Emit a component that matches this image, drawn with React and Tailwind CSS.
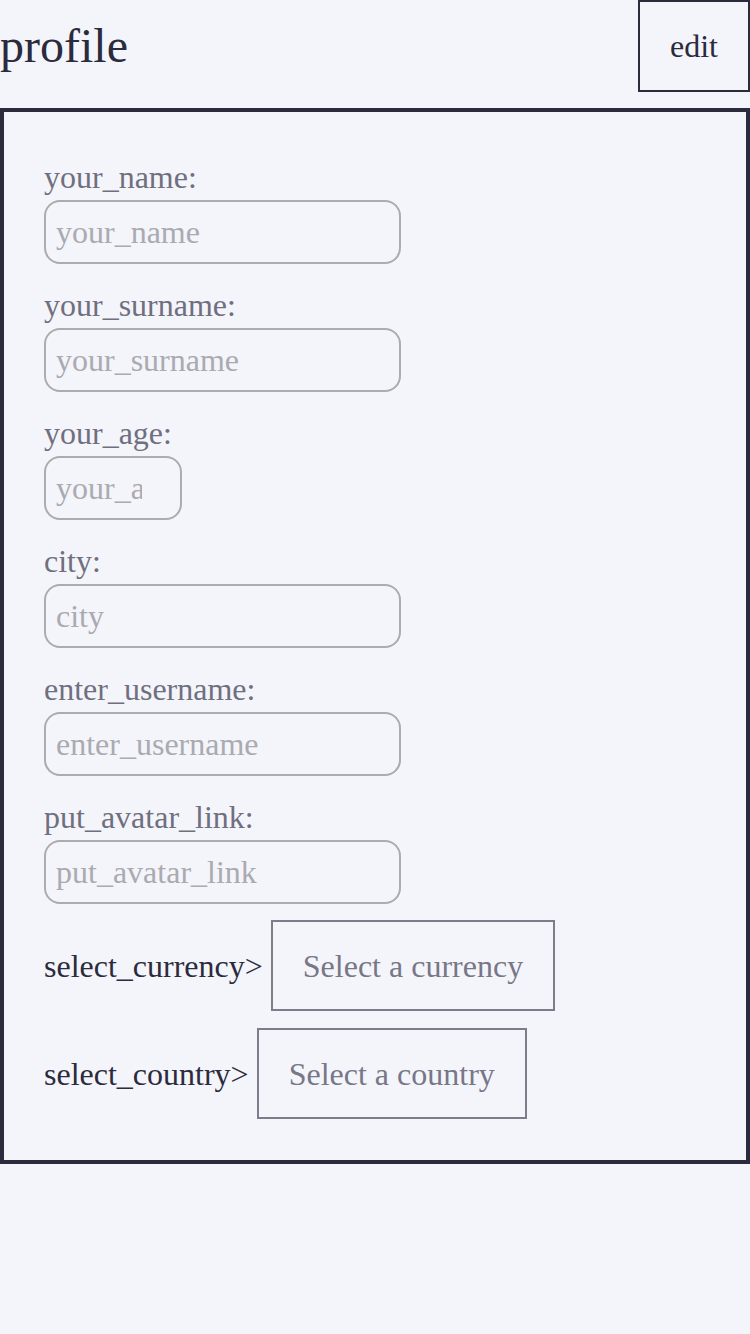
import React from "react";

const fields = [
  { name: "your_name", width: "w-[357px] pr-[10px]" },
  { name: "your_surname", width: "w-[357px] pr-[10px]" },
  { name: "your_age", width: "w-[138px] pr-[38px]" },
  { name: "city", width: "w-[357px] pr-[10px]" },
  { name: "enter_username", width: "w-[357px] pr-[10px]" },
  { name: "put_avatar_link", width: "w-[357px] pr-[10px]" },
];

export default function App() {
  return (
    <div className="min-h-screen bg-[#f4f5fa] text-[#2b2b3d] font-['Liberation_Serif','Times_New_Roman',serif]">
      {/* Header */}
      <div className="flex justify-between items-start h-[92px]">
        <h1 className="text-[48px] leading-none mt-[22px] text-[#2b2b3d]">profile</h1>
        <button
          type="button"
          className="w-[112px] h-[92px] border-2 border-[#2b2b3d] text-[32px] bg-transparent font-['Liberation_Serif',serif]"
        >
          edit
        </button>
      </div>

      {/* Form box */}
      <div className="mt-4 border-4 border-[#2b2b3d] pt-[47px] pb-[41px] pl-10">
        <form onSubmit={(e) => e.preventDefault()} className="flex flex-col">
          {fields.map((f) => (
            <div key={f.name} className="flex flex-col mb-[23px]">
              <label className="text-[32px] leading-[36px] text-[#6f6f80] mb-[5px]">
                {f.name}:
              </label>
              <input
                placeholder={f.name}
                className={`${f.width} h-[64px] border-2 border-[#ababb0] rounded-[16px] pl-[10px] text-[32px] bg-transparent placeholder:text-[#aaaab0] outline-none font-['Liberation_Serif',serif]`}
              />
            </div>
          ))}

          <div className="flex items-center -mt-[7px]">
            <span className="text-[32px] leading-[36px] mr-2">select_currency&gt;</span>
            <div className="h-[91px] border-2 border-[#7c7c8a] flex items-center px-[30px] text-[32px] text-[#777788]">
              Select a currency
            </div>
          </div>

          <div className="flex items-center mt-[17px]">
            <span className="text-[32px] leading-[36px] mr-2">select_country&gt;</span>
            <div className="h-[91px] border-2 border-[#7c7c8a] flex items-center px-[30px] text-[32px] text-[#777788]">
              Select a country
            </div>
          </div>
        </form>
      </div>
    </div>
  );
}
